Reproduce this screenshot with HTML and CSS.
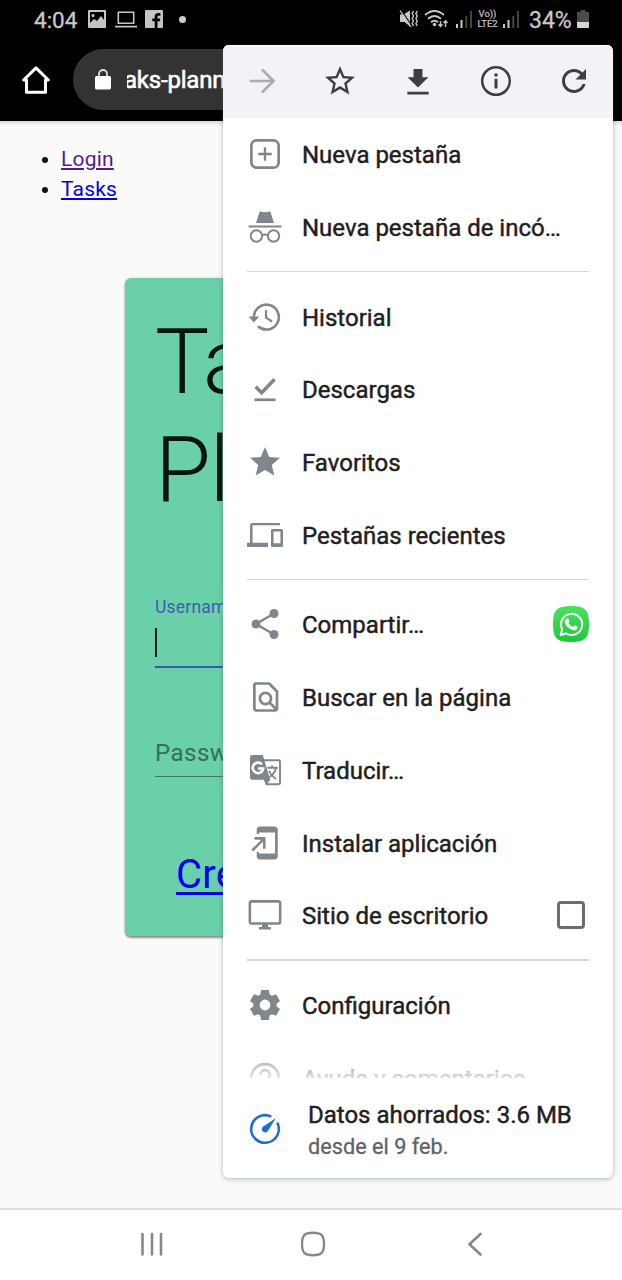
FILE: index.html
```html
<!DOCTYPE html>
<html lang="es">
<head>
<meta charset="utf-8">
<title>Task Planner</title>
<link rel="stylesheet" href="styles.css">
</head>
<body>
<div class="phone">
  <header class="browser">
    <div class="status">
      <div class="status-left">
        <span class="time">4:04</span>
        <svg class="st-pic" width="18" height="18" viewBox="0 0 18 18"><path fill="#c4c4c4" fill-rule="evenodd" d="M1 0h16a1 1 0 0 1 1 1v16a1 1 0 0 1-1 1H1a1 1 0 0 1-1-1V1a1 1 0 0 1 1-1zM2 2v11l4-4 3 2 4-5 3 4V2zM5 4a1.600 1.600 0 1 1 0 3.200A1.600 1.600 0 0 1 5 4z"/></svg>
        <svg class="st-laptop" width="22" height="17" viewBox="0 0 22 17"><path fill="none" stroke="#c4c4c4" stroke-width="1.600" d="M3.300 1.300h15.400v11H3.300zM0 15.600h22"/></svg>
        <svg class="st-fb" width="18" height="18" viewBox="0 0 18 18"><path fill="#c4c4c4" d="M1 0h16a1 1 0 0 1 1 1v16a1 1 0 0 1-1 1h-4.500v-6.700h2.400l.4-2.700h-2.800V7c0-.8.3-1.300 1.400-1.300h1.500V3.200c-4-.6-5.700.6-5.700 3.300v2.100H7.300v2.700h2.400V18H1a1 1 0 0 1-1-1V1a1 1 0 0 1 1-1z"/></svg>
        <span class="dot"></span>
      </div>
      <div class="status-right">
        <svg class="st-mute" width="20" height="20" viewBox="0 0 20 20"><path fill="#c8c8c8" d="M1 5.500h3.500L11 1.500v16L5.500 13H1z"/><path stroke="#000" stroke-width="1.200" d="M2.500 1.500L13 17"/><path stroke="#c8c8c8" stroke-width="1.300" d="M1 1.500L12 18"/><path fill="none" stroke="#c8c8c8" stroke-width="1.400" d="M14.500 2l-1.300 2.500 1.300 2.500-1.300 2.500 1.300 2.500-1.300 2.500 1.300 2.500M18.200 2l-1.300 2.500 1.300 2.500-1.300 2.500 1.300 2.500-1.300 2.500 1.300 2.500"/></svg>
        <svg class="st-wifi" width="25" height="20" viewBox="0 0 25 20"><g fill="none" stroke="#c8c8c8" stroke-width="1.800"><path d="M1 6q9.500-8 19 0M4 9.700q6.500-5.500 13 0M7 13.200q3.500-3 7 0"/><path stroke-width="1.400" d="M16.500 12v5.500M14.500 15.200l2 2.300 2-2.300M21.500 18v-6M19.500 14l2-2.300 2 2.300"/></g><circle cx="10.500" cy="15.500" r="1.700" fill="#c8c8c8"/></svg>
        <svg class="st-sig" width="17" height="18" viewBox="0 0 17 18"><path fill="#c8c8c8" d="M0 14h2v4H0zM4.500 10h2v8h-2z"/><path fill="#444" d="M9.300 6h2v12h-2zM14 1h2v17h-2z"/></svg>
        <span class="lte"><span>Vo))</span><span>LTE2</span></span>
        <svg class="st-sig2" width="17" height="18" viewBox="0 0 17 18"><path fill="#c8c8c8" d="M0 14h2v4H0zM4.500 10h2v8h-2z"/><path fill="#444" d="M9.300 6h2v12h-2zM14 1h2v17h-2z"/></svg>
        <span class="pct">34%</span>
        <svg class="st-bat" width="12" height="18" viewBox="0 0 12 18"><path fill="#4b4b4b" d="M3.500 0h5v2H12v10H0V2h3.500z"/><path fill="#d5d5d5" d="M0 12h12v5a1 1 0 0 1-1 1H1a1 1 0 0 1-1-1z"/></svg>
      </div>
    </div>
    <div class="toolbar">
      <svg class="home" width="28" height="28" viewBox="0 0 28 28"><path fill="none" stroke="#fff" stroke-width="3" stroke-linejoin="round" stroke-linecap="round" d="M1.700 14L14 1.900 26.300 14H23.500v12.200h-19V14z"/></svg>
      <div class="url">
        <svg width="16" height="21" viewBox="0 0 16 21"><path fill="none" stroke="#ddd" stroke-width="1.800" d="M4 8V5a4 4 0 0 1 8 0v3"/><rect y="7" width="16" height="13.500" rx="1.500" fill="#fff"/></svg>
        <span class="host">aks-plann</span>
      </div>
    </div>
  </header>

  <main class="page">
    <ul class="links">
      <li><a class="visited" href="#">Login</a></li>
      <li><a href="#">Tasks</a></li>
    </ul>
    <section class="card">
      <h1>Ta<br>Pl</h1>
      <div class="field active"><label>Usernam</label><div class="entry"><span class="caret"></span></div></div>
      <div class="field password"><div class="entry">Passw</div></div>
      <a class="create" href="#">Cre</a>
    </section>
  </main>

  <nav class="navbar">
    <svg width="24" height="24" viewBox="0 0 24 24"><path stroke="#888" stroke-width="2.600" stroke-linecap="round" d="M2.500 2v20.500M12 2v20.500M21 2v20.500"/></svg>
    <svg width="26" height="26" viewBox="0 0 26 26"><path fill="none" stroke="#888" stroke-width="2.400" d="M12 1.800C20.500 1.800 23 4 23 13s-2.500 11.200-11 11.200S1 22 1 13 3.500 1.800 12 1.800z"/></svg>
    <svg width="24" height="24" viewBox="0 0 24 24"><path fill="none" stroke="#888" stroke-width="2.600" stroke-linecap="round" stroke-linejoin="round" d="M17.500 2L6.500 12.200 17.500 22.500"/></svg>
  </nav>

  <aside class="menu">
    <div class="actions">
      <svg viewBox="0 0 24 24"><path fill="none" stroke="#a9adb0" stroke-width="1.800" stroke-linecap="round" stroke-linejoin="round" d="M4.500 12h15M12.500 4.800l7.200 7.200-7.200 7.200"/></svg>
      <svg viewBox="0 0 24 24"><path fill="#3c4043" d="M22 9.240l-7.190-.62L12 2 9.190 8.630 2 9.240l5.460 4.730L5.820 21 12 17.270 18.180 21l-1.630-7.030L22 9.240zM12 15.400l-3.760 2.270 1-4.280-3.320-2.880 4.380-.38L12 6.100l1.710 4.040 4.380.38-3.320 2.880 1 4.280L12 15.400z"/></svg>
      <svg viewBox="0 0 24 24"><path fill="#3c4043" d="M19 9.500h-4V4H9v5.500H5l7 6.800zM4.900 19.200v1.800h14.200v-1.800z"/></svg>
      <svg viewBox="0 0 24 24"><circle cx="12" cy="12" r="9.200" fill="none" stroke="#3c4043" stroke-width="1.700"/><path fill="#3c4043" d="M11 10.500h2V17h-2zM11 7h2v2h-2z"/></svg>
      <svg viewBox="0 0 24 24"><path fill="#3c4043" d="M17.650 6.350C16.200 4.900 14.210 4 12 4c-4.420 0-7.990 3.580-7.990 8s3.570 8 7.990 8c3.730 0 6.840-2.550 7.730-6h-2.080c-.82 2.330-3.040 4-5.650 4-3.310 0-6-2.690-6-6s2.690-6 6-6c1.660 0 3.140.69 4.220 1.780L13 11h7V4l-2.350 2.350z"/></svg>
    </div>
    <div class="list">
      <div class="item"><svg viewBox="0 0 24 24"><rect x="2.900" y="2.900" width="18.200" height="18.200" rx="3.500" fill="none" stroke="#80868b" stroke-width="1.800"/><path stroke="#80868b" stroke-width="1.600" d="M12 7.500v9M7.500 12h9"/></svg><span>Nueva pestaña</span></div>
      <div class="item"><svg viewBox="0 0 24 24"><path fill="#80868b" d="M8.300 2.200Q8.600 1.400 9.500 1.700q2.500.8 5 0 .9-.3 1.200.5L18 9.400H6z M1 11h22v1.300H1z"/><g fill="none" stroke="#80868b" stroke-width="1.300"><circle cx="6.300" cy="18" r="3.800"/><circle cx="17.700" cy="18" r="3.800"/><path d="M10 17.500q2-1 4 0"/></g></svg><span>Nueva pestaña de incó…</span></div>
      <hr>
      <div class="item"><svg viewBox="0 0 24 24"><path fill="none" stroke="#80868b" stroke-width="1.700" d="M4.600 12A8.300 8.300 0 1 1 7.300 18.200"/><path fill="#80868b" d="M1 11.600h7.200l-3.600 4z"/><path fill="none" stroke="#80868b" stroke-width="1.500" d="M12.700 7.500v5l4 2.500"/></svg><span>Historial</span></div>
      <div class="item"><svg viewBox="0 0 24 24"><path fill="none" stroke="#80868b" stroke-width="2.400" d="M5.800 10.500l4 4 8.600-9"/><path stroke="#80868b" stroke-width="1.800" d="M5 19.200h14"/></svg><span>Descargas</span></div>
      <div class="item"><svg viewBox="0 0 24 24"><path fill="#80868b" d="M12 17.270L18.180 21l-1.640-7.030L22 9.240l-7.190-.61L12 2 9.190 8.630 2 9.240l5.460 4.730L5.820 21z"/></svg><span>Favoritos</span></div>
      <div class="item"><svg viewBox="0 0 24 24"><path fill="#80868b" d="M3.700 5.500H22V4H3.700C2.800 4 2 4.800 2 5.700v11.500H0V20h14v-2.800H3.700zM23 8h-6c-.55 0-1 .45-1 1v10c0 .55.450 1 1 1h6c.55 0 1-.45 1-1V9c0-.55-.45-1-1-1zm-.7 9.500h-4.600v-7.800h4.600z"/></svg><span>Pestañas recientes</span></div>
      <hr>
      <div class="item"><svg viewBox="0 0 24 24"><path fill="none" stroke="#80868b" stroke-width="1.600" d="M18 5L6 12l12 7"/><g fill="#80868b"><circle cx="18" cy="5" r="3"/><circle cx="6" cy="12" r="3"/><circle cx="18" cy="19" r="3"/></g></svg><span>Compartir…</span>
        <svg class="wa" viewBox="0 0 36 36"><defs><linearGradient id="wag" x2="0" y2="1"><stop stop-color="#49e25d"/><stop offset="1" stop-color="#20c63c"/></linearGradient></defs><path fill="url(#wag)" d="M18 0c14 0 18 4 18 18s-4 18-18 18S0 32 0 18 4 0 18 0z"/><path fill="none" stroke="#fff" stroke-width="2" stroke-linejoin="round" d="M7.700 29l1.500-5.700A10.600 10.600 0 1 1 13 27.400z"/><path fill="#fff" d="M14.300 12.200c.7-.1 1 .1 1.200.7l.8 2c.2.600-.5 1.200-1 1.900 1.300 2.200 2.700 3.200 4.900 4.100.6-.7 1.100-1.800 1.800-1.500l2.300 1.100c.6.400.4 1.700-.1 2.500-.8 1-2.500 1.600-4.300 1.100-4.200-1.200-6.700-3.900-8-7-.7-1.900.4-4.500 2.400-4.900z"/></svg></div>
      <div class="item"><svg viewBox="0 0 24 24"><path fill="none" stroke="#80868b" stroke-width="1.800" stroke-linejoin="round" d="M5.500 3h9.300l5.200 5.300v11.200a1.500 1.500 0 0 1-1.500 1.500h-12A1.500 1.500 0 0 1 4.900 19.500V4A1 1 0 0 1 5.500 3z"/><circle cx="12.300" cy="13" r="3.700" fill="none" stroke="#80868b" stroke-width="1.800"/><path stroke="#80868b" stroke-width="1.800" d="M15 15.700l4.500 4.500"/></svg><span>Buscar en la página</span></div>
      <div class="item"><svg viewBox="0 0 24 24"><path fill="#fff" stroke="#80868b" stroke-width="1.300" d="M10 5.500h11a1 1 0 0 1 1 1v14a1 1 0 0 1-1 1h-8z"/><path fill="#80868b" d="M3.500 2h7l5 16.500h-12A1.500 1.500 0 0 1 2 17V3.500A1.500 1.500 0 0 1 3.500 2zM11 18.500h4.500L13 22z"/><path fill="none" stroke="#fff" stroke-width="1.700" d="M9.900 8.200A3.500 3.500 0 1 0 10.800 11H7.400"/><path fill="none" stroke="#80868b" stroke-width="1.200" d="M13.600 10.500h7M16.700 9v1.500M19.300 10.500c-.5 3-2.500 5-4.300 6.200M14.700 12.500c1 2.500 3 4.300 4.800 5.500"/></svg><span>Traducir…</span></div>
      <div class="item"><svg viewBox="0 0 24 24"><path fill="#80868b" d="M18.500 1h-10C7.400 1 6.500 1.900 6.500 3v3H8V5h10.700v14H8v-1H6.500v3c0 1.100.9 2 2 2h10c1.100 0 2-.9 2-2V3c0-1.100-.9-2-2-2z"/><path fill="none" stroke="#80868b" stroke-width="1.700" d="M3.500 17l7.800-7.800M5 8.900h6.500v6.900"/></svg><span>Instalar aplicación</span></div>
      <div class="item"><svg viewBox="0 0 24 24"><rect x="1.900" y="2.900" width="20.200" height="14.800" rx="1.200" fill="none" stroke="#80868b" stroke-width="1.700"/><path fill="#80868b" d="M10 18h4v2h2v1.700H8V20h2z"/></svg><span>Sitio de escritorio</span><i class="check"></i></div>
      <hr>
      <div class="item"><svg viewBox="0 0 24 24"><path fill="#80868b" fill-rule="evenodd" d="M9.400 2h5.200l.5 3 1.500.9 2.800-1.100 2.600 4.500-2.300 1.800v1.800l2.300 1.800-2.600 4.500-2.800-1.100-1.500.9-.5 3H9.400l-.5-3-1.500-.9-2.800 1.100L2 14.700l2.300-1.800v-1.800L2 9.300l2.600-4.500 2.800 1.100 1.500-.9zM12 8.400a3.600 3.600 0 1 0 0 7.200 3.600 3.600 0 0 0 0-7.200z"/></svg><span>Configuración</span></div>
      <div class="item help"><svg viewBox="0 0 24 24"><circle cx="12" cy="12" r="9.200" fill="none" stroke="#80868b" stroke-width="1.800"/><path fill="none" stroke="#80868b" stroke-width="1.800" d="M8.800 10a3.200 3.200 0 1 1 5.500 2.200c-1.200 1.200-2.300 1.600-2.300 3.300M12 16.700v2"/></svg><span>Ayuda y comentarios</span></div>
      <div class="fade"></div>
    </div>
    <div class="saver">
      <svg viewBox="0 0 24 24"><path fill="none" stroke="#1a6fd6" stroke-width="1.700" d="M16.200 3.800A9.200 9.200 0 1 0 20.200 7.800"/><path fill="#1a6fd6" d="M19.300 4.700l-5.600 8.900a2 2 0 1 1-3.100-3.100z"/></svg>
      <div><div class="saved">Datos ahorrados: 3.6 MB</div><div class="since">desde el 9 feb.</div></div>
    </div>
  </aside>
</div>
</body>
</html>
```

FILE: styles.css
```css
* { box-sizing: border-box; }
body { margin: 0; font-family: Roboto, "Liberation Sans", sans-serif; }
svg { display: block; flex: none; }
.phone { position: relative; width: 622px; height: 1280px; overflow: hidden; display: flex; flex-direction: column; background: #fafafa; }

.browser { height: 121px; background: #000; flex: none; }
.status { height: 38px; display: flex; justify-content: space-between; padding: 0 33px 0 34px; color: #c8c8c8; }
.status-left, .status-right { display: flex; align-items: center; }
.time { font-size: 22.500px; width: 54px; padding-top: 2px; -webkit-text-stroke: .3px; }
.st-laptop { margin-left: 9px; }
.st-fb { margin-left: 8px; }
.dot { width: 7px; height: 7px; border-radius: 50%; background: #ccc; margin-left: 16px; }
.st-wifi { margin-left: 5px; }
.st-sig { margin-left: 7px; }
.lte { display: flex; flex-direction: column; align-items: center; width: 23px; margin: 0 4px 0 3px; font-size: 9.500px; line-height: 10px; -webkit-text-stroke: .2px; }
.pct { font-size: 23px; margin-left: 9px; width: 48px; padding-top: 2px; -webkit-text-stroke: .3px; }

.toolbar { height: 83px; display: flex; align-items: center; padding-left: 22px; }
.home { margin-right: 23px; }
.url { width: 200px; height: 61px; border-radius: 31px 0 0 31px; background: #333; display: flex; align-items: center; padding-left: 22px; }
.host { margin-left: 16px; overflow: hidden; text-indent: -3px; font-size: 24px; letter-spacing: -.2px; color: #fff; -webkit-text-stroke: .6px; }

.page { flex: 1; padding-top: 23px; background: linear-gradient(#d8d8d8, #fafafa 5px); }
.links { margin: 0; padding-left: 61px; font-size: 21px; line-height: 30px; letter-spacing: .2px; color: #111; }
a { color: #00e; text-underline-offset: 2px; text-decoration-thickness: 2px; }
a.visited { color: #551a8b; }
.card { width: 373px; height: 658px; margin: 74px 0 0 125px; padding: 30px 30px 0; border-radius: 6px; background: #69d0a9; box-shadow: 0 2px 2px rgba(0,0,0,.4), 0 0 3px rgba(0,0,0,.15); }
h1 { margin: 0; font-size: 91px; line-height: 108px; font-weight: 300; letter-spacing: -1.500px; color: #06150e; }
.field { border-bottom: 1.500px solid #3c7962; color: #32705a; }
.active { height: 72px; margin-top: 72px; border-bottom: 2.500px solid #3f51b5; }
.active label { display: block; font-size: 17.500px; line-height: 22px; letter-spacing: .2px; color: #3d5cb2; }
.caret { display: block; width: 2px; height: 29px; margin-top: 10px; background: #102018; }
.password { height: 37px; margin-top: 72px; font-size: 24px; line-height: 27px; letter-spacing: .5px; }
.create { display: block; width: fit-content; margin: 74px 0 0 21px; font-size: 40px; line-height: 48px; letter-spacing: .3px; text-decoration-thickness: 3px; text-underline-offset: 4px; }

.navbar { height: 72px; border-top: 2px solid #dedede; background: #fff; display: flex; justify-content: space-between; align-items: center; padding: 0 135px 3px 140px; flex: none; }

.menu { position: absolute; left: 223px; top: 45px; width: 390px; height: 1133px; background: #fff; border-radius: 6px; overflow: hidden; display: flex; flex-direction: column; box-shadow: 0 1px 5px rgba(60,80,75,.4); }
.actions { height: 73px; background: #f1f3f6; display: flex; flex: none; border-top: 2px solid #fafbfb; }
.actions svg { width: 78px; height: 36px; margin-top: 16px; }
.list { height: 960px; overflow: hidden; position: relative; flex: none; }
.item { height: 72.700px; display: flex; align-items: center; padding: 0 24px; font-size: 24px; color: #1f2022; white-space: nowrap; }
.item > svg { width: 36px; height: 36px; margin-right: 19px; }
.item > span { -webkit-text-stroke: .45px; padding-top: 2px; }
.item > svg.wa { margin: 0 0 0 auto; }
.check { width: 28px; height: 28px; border: 3px solid #6a6e72; border-radius: 4px; margin: 0 4px 0 auto; }
hr { height: 1.500px; border: 0; margin: 7.500px 24px 8px; background: #d5d7d8; }
.help span { color: #555; }
.fade { position: absolute; left: 0; right: 0; bottom: 0; height: 32px; background: linear-gradient(rgba(255,255,255,.1), rgba(255,255,255,.8)); }
.saver { flex: 1; display: flex; padding: 21px 24px 0; }
.saver > svg { width: 36px; height: 36px; margin: 12px 25px 0 0; }
.saved { font-size: 24px; line-height: 32px; color: #1f2022; -webkit-text-stroke: .45px; white-space: nowrap; }
.since { font-size: 21.700px; line-height: 31px; color: #5f6368; -webkit-text-stroke: .3px; }
```
